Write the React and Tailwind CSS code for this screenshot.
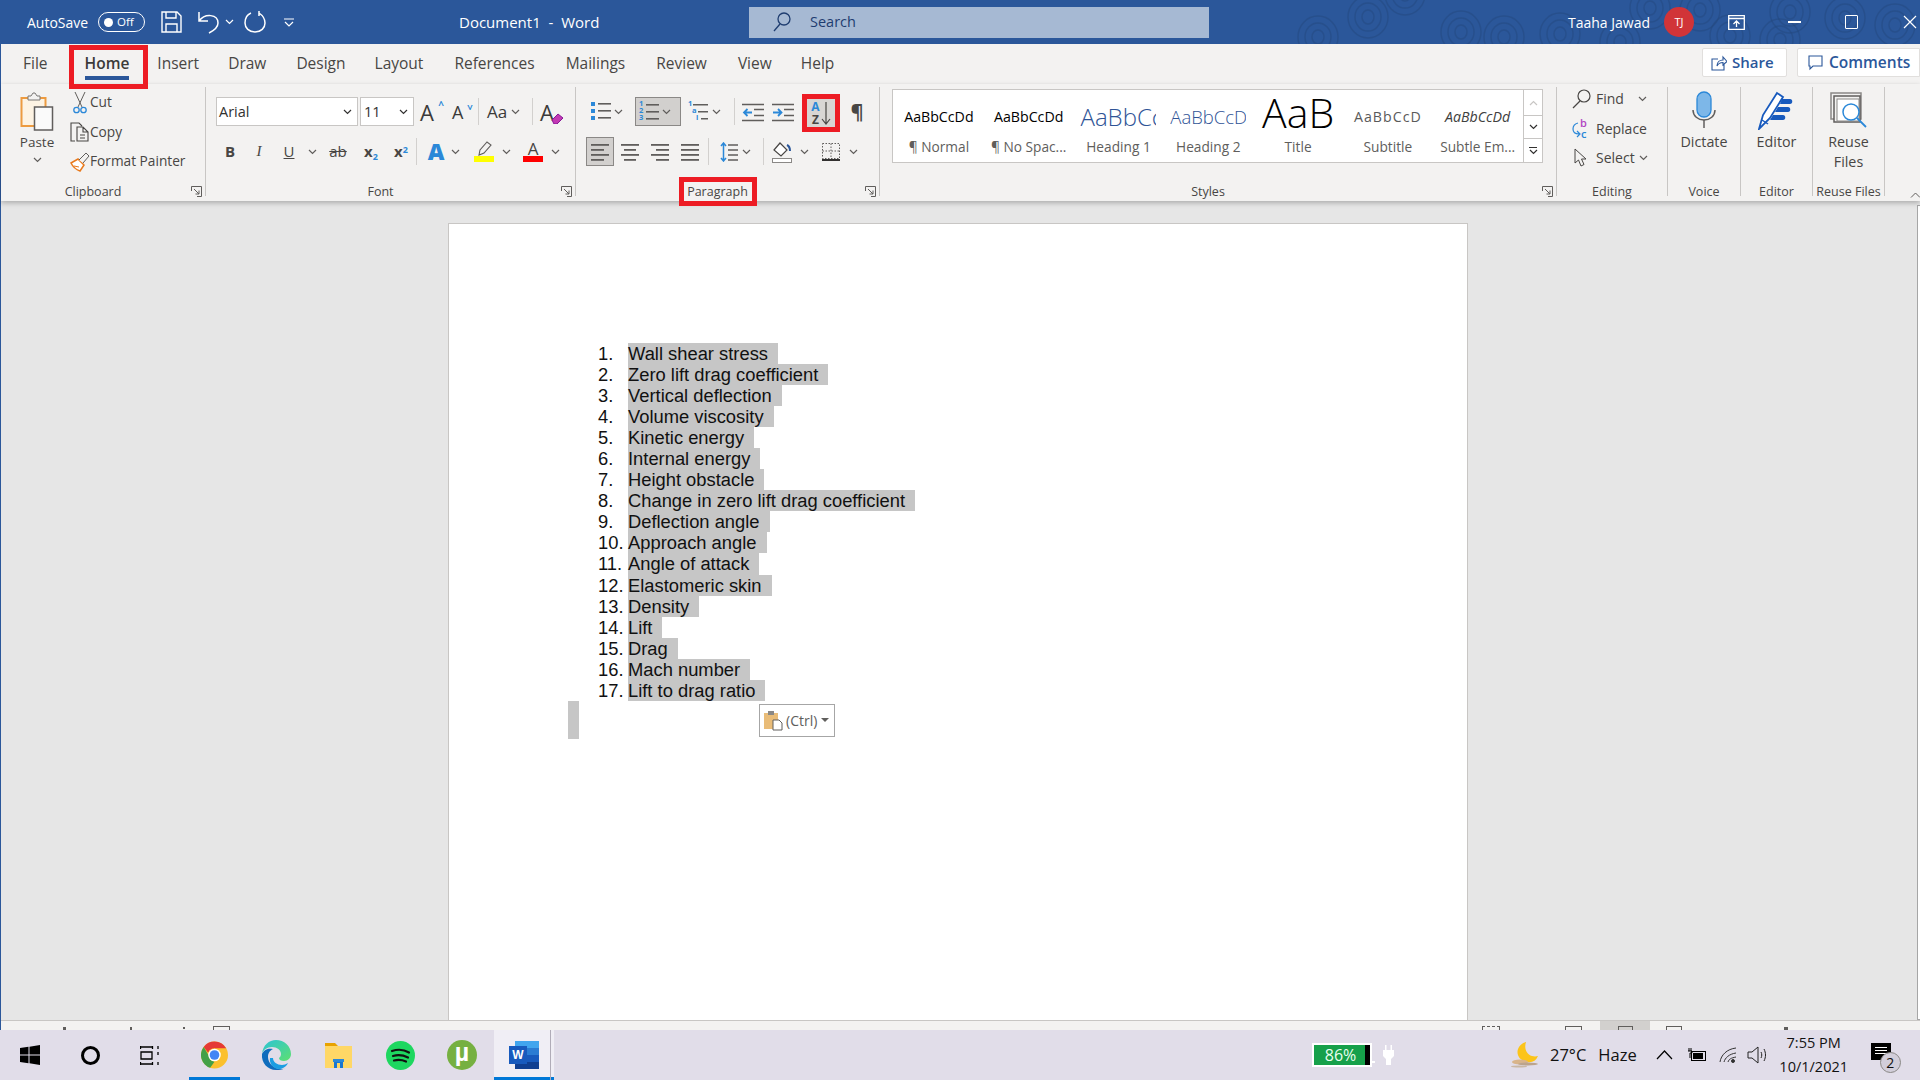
import React from "react";

const Chev = ({ color = "#605e5c", className = "" }) => (
  <svg width="9" height="6" viewBox="0 0 9 6" fill="none" className={className}>
    <path d="M1 1l3.5 3.5L8 1" stroke={color} strokeWidth="1.2" />
  </svg>
);

const ChevSlot = ({ className = "" }) => (
  <div className={`w-[14px] flex justify-center items-center ${className}`}>
    <Chev />
  </div>
);

const Sep = ({ className = "" }) => <div className={`w-px h-[27px] bg-[#d2d0ce] ${className}`} />;

const Launcher = () => (
  <svg width="11" height="11" viewBox="0 0 11 11" fill="none" className="absolute right-[3px] top-[2px]">
    <path d="M.5 5V.5H10.5V10.5H6M3 3l5 5M8 4.5V8H4.5" stroke="#605e5c" />
  </svg>
);

const Group = ({ label, launcher, className = "", children, labelBox }) => (
  <div className={`relative h-[109px] shrink-0 border-r border-[#c8c6c4] flex flex-col ${className}`}>
    <div className="flex-1 min-h-0">{children}</div>
    <div className={`relative h-[16px] -mb-[4px] flex justify-center items-center text-[12.5px] leading-[16px] text-[#484644] ${launcher ? "pr-[20px]" : ""}`}>
      <span className="relative whitespace-nowrap">
        {label}
        {labelBox && <span className="absolute left-[-8px] right-[-9px] top-[-7px] bottom-[-6px] border-[5px] border-[#ed1c24]" />}
      </span>
      {launcher && <Launcher />}
    </div>
  </div>
);

const Lines = ({ rows, w = 20 }) => (
  <svg width={w} height="20" viewBox={`0 0 ${w} 20`}>
    {rows.map(([x1, x2, y], i) => (
      <rect key={i} x={x1} y={y} width={x2 - x1} height="1.8" fill="#605e5c" />
    ))}
  </svg>
);

const Bullets = () => (
  <svg width="20" height="20" viewBox="0 0 20 20">
    {[2, 9, 16].map((y) => (
      <g key={y}>
        <rect x="0" y={y - 2} width="4" height="4" fill="#2b88d8" />
        <rect x="7" y={y - 1} width="13" height="1.6" fill="#605e5c" />
      </g>
    ))}
  </svg>
);

const Numbered = () => (
  <div className="relative w-[20px] h-[20px]">
    <svg width="20" height="20" viewBox="0 0 20 20" className="absolute inset-0">
      {[3, 10, 17].map((y) => (
        <rect key={y} x="7" y={y - 1} width="13" height="1.6" fill="#605e5c" />
      ))}
    </svg>
    <div className="absolute left-0 top-[-2px] flex flex-col text-[7.5px] leading-[7.4px] font-bold text-[#2b88d8]">
      <span>1</span>
      <span>2</span>
      <span>3</span>
    </div>
  </div>
);

const Multi = () => (
  <div className="relative w-[20px] h-[20px]">
    <svg width="20" height="20" viewBox="0 0 20 20" className="absolute inset-0">
      <rect x="5" y="2" width="15" height="1.5" fill="#605e5c" />
      <rect x="10" y="9" width="10" height="1.5" fill="#605e5c" />
      <rect x="13" y="16" width="7" height="1.5" fill="#605e5c" />
    </svg>
    <div className="absolute left-0 top-[-2px] flex flex-col text-[7.5px] leading-[7.4px] font-bold text-[#2b88d8]">
      <span>1</span>
      <span className="ml-[4px]">a</span>
      <span className="ml-[8px]">i</span>
    </div>
  </div>
);

const Indent = ({ flip }) => (
  <svg width="22" height="20" viewBox="0 0 22 20" fill="none">
    <path d="M0 2.5h22M0 18.5h22M12 7.5h10M12 13.5h10" stroke="#605e5c" strokeWidth="1.6" />
    {flip ? (
      <path d="M1 10.5h8M6 7l3.5 3.5L6 14" stroke="#2b88d8" strokeWidth="1.8" />
    ) : (
      <path d="M10 10.5H2M5.500 7L2 10.5 5.500 14" stroke="#2b88d8" strokeWidth="1.8" />
    )}
  </svg>
);

const titleRings = [
  [1318, 37], [1368, 17], [1461, 32], [1504, 37], [1405, -6], [1560, 34], [1620, 42], [1650, 8],
  [1700, 10], [1730, 36], [1790, 12], [1845, 18], [1895, 25], [1780, 40],
];

const TitleRings = () => (
  <svg width="1920" height="44" viewBox="0 0 1920 44" className="absolute inset-0" fill="none">
    {titleRings.map(([x, y]) => (
      <g key={`${x}-${y}`} stroke="#24497f" strokeWidth="1.4" opacity="0.5">
        <ellipse cx={x} cy={y} rx="6" ry="7" />
        <ellipse cx={x} cy={y} rx="13" ry="14" />
        <ellipse cx={x} cy={y} rx="20" ry="21" />
      </g>
    ))}
  </svg>
);

const TitleBar = () => (
  <div className="relative h-[44px] shrink-0 bg-[#2b579a] text-white flex items-center text-[14px]">
    <TitleRings />
    <div className="relative flex items-center pl-[27px] w-[459px]">
      <span className="w-[71px] whitespace-nowrap">AutoSave</span>
      <div className="w-[47px] h-[20px] rounded-full border border-white flex items-center pl-[5px] gap-[4px]">
        <span className="w-[9px] h-[9px] rounded-full bg-white" />
        <span className="text-[11.5px] leading-none">Off</span>
      </div>
      <svg width="21" height="22" viewBox="0 0 21 22" fill="none" stroke="white" strokeWidth="1.4" className="ml-[16px]">
        <path d="M1 1h15l4 4v16H1zM5 1v6h10V1M5 21v-8h11v8" />
      </svg>
      <svg width="23" height="24" viewBox="0 0 23 24" fill="none" stroke="white" strokeWidth="1.5" className="ml-[15px]">
        <path d="M2 2v9h9M2 11C8 3 21 4 21 13c0 4-3 7-9 10" />
      </svg>
      <Chev color="white" className="ml-[5px]" />
      <svg width="22" height="24" viewBox="0 0 22 24" fill="none" stroke="white" strokeWidth="1.5" className="ml-[10px]">
        <path d="M7 3C2 5 1 9 1 13c0 5 4 9 10 9s10-4 10-9c0-5-3-8-6-10M15 1v5" />
      </svg>
      <svg width="10" height="9" viewBox="0 0 10 9" fill="none" stroke="white" strokeWidth="1.2" className="ml-[18px]">
        <path d="M0 1h10M1 4l4 4 4-4" />
      </svg>
    </div>
    <span className="relative w-[290px] text-[15px] whitespace-nowrap">Document1&nbsp; -&nbsp; Word</span>
    <div className="relative w-[460px] h-[31px] bg-[#a6b9d3] flex items-center pl-[24px] text-[#1f3d70]">
      <svg width="18" height="20" viewBox="0 0 18 20" fill="none" stroke="#1f3d70" strokeWidth="1.3">
        <circle cx="11" cy="7" r="6" />
        <path d="M7 12L1 19" />
      </svg>
      <span className="ml-[19px] text-[14.5px]">Search</span>
    </div>
    <span className="relative ml-[359px] w-[96px] text-[14px] whitespace-nowrap">Taaha Jawad</span>
    <div className="relative w-[30px] h-[30px] rounded-full bg-[#d13438] flex items-center justify-center text-[11px]">TJ</div>
    <svg width="17" height="15" viewBox="0 0 17 15" fill="none" stroke="white" strokeWidth="1.3" className="relative ml-[34px]">
      <path d="M.7.7h15.600v13.600H.7zM.7 3.500h15.600M8.500 12V6M5.500 9l3-3 3 3" />
    </svg>
    <div className="relative ml-[43px] w-[13px] h-[1.5px] bg-white" />
    <div className="relative ml-[44px] w-[13px] h-[14px] border border-white rounded-[1px]" />
    <svg width="14" height="14" viewBox="0 0 14 14" stroke="white" strokeWidth="1.2" className="relative ml-[45px]">
      <path d="M1 1l12 12M13 1L1 13" />
    </svg>
  </div>
);

const tabs = [
  ["File", ""],
  ["Insert", "-ml-[2px]"],
  ["Draw", "-ml-[1px]"],
  ["Design", ""],
  ["Layout", "-ml-[1px]"],
  ["References", "ml-[1px]"],
  ["Mailings", "ml-[1px]"],
  ["Review", "ml-[1px]"],
  ["View", "ml-[1px]"],
  ["Help", "-ml-[1px]"],
];

const TabRow = () => (
  <div className="h-[40px] flex items-start pl-[22px] gap-[30px] pt-[8px] text-[15.5px] text-[#484644] relative z-20">
    <span>File</span>
    <span className="relative ml-[7px] font-semibold text-[#3b3a39]">
      Home
      <span className="absolute left-0 right-0 top-[24px] h-[4px] bg-[#2b579a]" />
      <span className="absolute left-[-16px] right-[-19px] top-[-7px] h-[44px] border-[5px] border-[#ed1c24]" />
    </span>
    {tabs.slice(1).map(([t, cls]) => (
      <span key={t} className={cls}>{t}</span>
    ))}
    <div className="ml-auto flex gap-[10px] -mt-[4px]">
      <div className="w-[85px] h-[29px] bg-white border border-[#e1dfdd] rounded-[2px] flex items-center pl-[8px] gap-[5px] text-[#2b579a] font-semibold text-[15px]">
        <svg width="16" height="16" viewBox="0 0 16 16" fill="none" stroke="#2b579a" strokeWidth="1.1">
          <path d="M7 4H1v11h12V9M6 11c0-4 3-6 6-6V2l4 4.500L12 10V7.500C9 7.500 7 9 6 11z" />
        </svg>
        Share
      </div>
      <div className="w-[123px] h-[29px] bg-white border border-[#e1dfdd] rounded-l-[2px] flex items-center pl-[10px] gap-[6px] text-[#2b579a] font-semibold text-[15.5px]">
        <svg width="15" height="16" viewBox="0 0 15 16" fill="none" stroke="#2b579a" strokeWidth="1.1">
          <path d="M1 1h13v10H5l-3 3v-3H1z" />
        </svg>
        Comments
      </div>
    </div>
  </div>
);

const SmallTool = ({ icon, label }) => (
  <div className="flex items-center h-[29.500px]">
    <div className="w-[21px] flex justify-center">{icon}</div>
    <span className="whitespace-nowrap text-[#484644] text-[13.7px]">{label}</span>
  </div>
);

const Clipboard = () => (
  <Group label="Clipboard" launcher className="w-[205px]">
    <div className="flex pt-[5px] pl-[10px]">
      <div className="w-[52px] flex flex-col items-center text-[13.5px] text-[#484644]">
        <svg width="34" height="39" viewBox="0 0 34 39" fill="none">
          <rect x="1.500" y="6" width="24" height="28" fill="#fdf3e3" stroke="#ed9b40" strokeWidth="2" />
          <path d="M8 8V4h3l2-3h2l2 3h3v4z" fill="#f3f2f1" stroke="#797775" />
          <rect x="14.500" y="15" width="18" height="23" fill="#fafafa" stroke="#605e5c" strokeWidth="1.5" />
        </svg>
        <span className="mt-[1px] leading-[20px]">Paste</span>
        <Chev className="mt-[5px]" />
      </div>
      <div className="ml-[6px] -mt-[4px]">
        <SmallTool
          label="Cut"
          icon={
            <svg width="16" height="22" viewBox="0 0 16 22" fill="none">
              <path d="M3 0l7 15M13 0L6 15" stroke="#605e5c" />
              <circle cx="4.500" cy="18" r="2.700" stroke="#2b88d8" strokeWidth="1.300" />
              <circle cx="11.500" cy="18" r="2.700" stroke="#2b88d8" strokeWidth="1.300" />
            </svg>
          }
        />
        <SmallTool
          label="Copy"
          icon={
            <svg width="19" height="20" viewBox="0 0 19 20" fill="none" stroke="#484644" strokeWidth="1.1">
              <path d="M5 19H1V1h8l3 3M7 5h6l5 5v9H7zM13 5v5h5M10 13h5M10 16h5" />
            </svg>
          }
        />
        <SmallTool
          label="Format Painter"
          icon={
            <svg width="20" height="20" viewBox="0 0 20 20" fill="none">
              <path d="M1 11l7-4 6 6-4 6c-3-1-7-4-9-8z" fill="#fff" stroke="#e97a1d" strokeWidth="1.500" />
              <path d="M9 8l7-7 3 3-6 7" fill="#f3f2f1" stroke="#605e5c" />
              <path d="M4 14l5 1" stroke="#e97a1d" />
            </svg>
          }
        />
      </div>
    </div>
  </Group>
);

const Sel = ({ className = "", children }) => (
  <div className={`h-[29px] bg-white border border-[#c8c6c4] flex items-center justify-between pl-[2px] pr-[5px] text-[14.5px] text-[#323130] ${className}`}>
    <span>{children}</span>
    <Chev color="#323130" />
  </div>
);

const Font = () => (
  <Group label="Font" launcher className="w-[370px]">
    <div className="pt-[10px]">
      <div className="flex items-center h-[29px] text-[#3b3a39]">
        <Sel className="ml-[10px] w-[142px]">Arial</Sel>
        <Sel className="ml-[2px] w-[54px] pl-[3px]">11</Sel>
        <div className="ml-[6px] w-[22px] relative text-[22px] leading-none">
          A<span className="absolute right-[-2px] top-[-1px] text-[#2b88d8] text-[10px] font-bold">^</span>
        </div>
        <div className="ml-[10px] w-[20px] relative text-[18px] leading-none">
          A<span className="absolute right-[-1px] top-[-2px] text-[#2b88d8] text-[10px] font-bold rotate-180">^</span>
        </div>
        <Sep className="ml-[6px]" />
        <span className="ml-[8px] w-[22px] text-[17px] leading-none whitespace-nowrap">Aa</span>
        <Chev className="ml-[2px]" />
        <Sep className="ml-[12px]" />
        <div className="ml-[7px] w-[22px] relative text-[22px] leading-none">
          A
          <svg width="13" height="11" viewBox="0 0 13 11" className="absolute right-[-2px] bottom-[-1px]">
            <path d="M1 7l6-6 5 4-6 6H3z" fill="#c239b3" stroke="#881798" />
          </svg>
        </div>
      </div>
      <div className="flex items-center h-[29px] mt-[11px] text-[#484644]">
        <span className="ml-[10px] w-[28px] text-center font-bold text-[15px]">B</span>
        <span className="w-[30px] text-center italic text-[15px] font-['Liberation_Serif',serif]">I</span>
        <span className="w-[30px] text-center underline text-[15px]">U</span>
        <ChevSlot className="ml-[1px]" />
        <span className="w-[36px] text-center line-through text-[15px] ml-[1px]">ab</span>
        <span className="w-[30px] text-center text-[15px] font-bold">
          x<sub className="text-[#2b88d8] text-[9px] font-bold">2</sub>
        </span>
        <span className="w-[30px] text-center text-[15px] font-bold">
          x<sup className="text-[#2b88d8] text-[9px] font-bold">2</sup>
        </span>
        <Sep />
        <span className="ml-[7px] w-[24px] text-center text-[23px] leading-none font-extrabold text-[#2b88d8]">A</span>
        <ChevSlot />
        <div className="ml-[10px] w-[24px] flex flex-col items-center">
          <svg width="18" height="15" viewBox="0 0 18 15" fill="none" stroke="#605e5c" strokeWidth="1.100">
            <path d="M4 14l1-5 7-8 4 3-7 8z" />
          </svg>
          <div className="w-[20px] h-[6px] bg-[#ffff00]" />
        </div>
        <ChevSlot className="ml-[3px]" />
        <div className="ml-[8px] w-[24px] flex flex-col items-center">
          <span className="text-[17px] leading-[15px] h-[15px]">A</span>
          <div className="w-[20px] h-[6px] bg-[#ff0000]" />
        </div>
        <ChevSlot className="ml-[3px]" />
      </div>
    </div>
  </Group>
);

const Paragraph = () => (
  <Group label="Paragraph" launcher labelBox className="w-[304px]">
    <div className="pt-[10px]">
      <div className="flex items-center h-[29px]">
        <div className="ml-[15px]"><Bullets /></div>
        <ChevSlot />
        <div className="ml-[10px] w-[46px] h-[29px] bg-[#d2d0ce] border border-[#8a8886] flex items-center pl-[3px] gap-[3px]">
          <Numbered />
          <Chev />
        </div>
        <div className="ml-[7px]"><Multi /></div>
        <ChevSlot className="ml-[1px]" />
        <Sep className="ml-[11px]" />
        <div className="ml-[7px]"><Indent /></div>
        <div className="ml-[8px]"><Indent flip /></div>
        <div className="relative ml-[8px] mt-[3px] w-[38px] h-[38px] bg-[#d8d6d4] border-[5px] border-[#ed1c24] flex items-center justify-center gap-[1px]">
          <div className="flex flex-col items-center text-[12px] leading-[13px] font-bold">
            <span className="text-[#2b88d8]">A</span>
            <span className="text-[#484644]">Z</span>
          </div>
          <svg width="10" height="24" viewBox="0 0 10 24" fill="none" stroke="#484644" strokeWidth="1.200">
            <path d="M5 1v22M1 18l4 5 4-5" />
          </svg>
        </div>
        <span className="ml-[8px] w-[18px] text-center text-[20px] leading-none font-bold text-[#484644]">¶</span>
      </div>
      <div className="flex items-center h-[29px] mt-[11px]">
        <div className="ml-[10px] w-[28px] h-[29px] bg-[#d2d0ce] border border-[#8a8886] flex items-center justify-center">
          <Lines rows={[[0, 18, 2], [0, 13, 7], [0, 18, 12], [0, 13, 17]]} w={18} />
        </div>
        <div className="ml-[6px]"><Lines rows={[[1, 19, 2], [4, 16, 7], [1, 19, 12], [4, 16, 17]]} /></div>
        <div className="ml-[10px]"><Lines rows={[[1, 19, 2], [6, 19, 7], [1, 19, 12], [6, 19, 17]]} /></div>
        <div className="ml-[10px]"><Lines rows={[[1, 19, 2], [1, 19, 7], [1, 19, 12], [1, 19, 17]]} /></div>
        <Sep className="ml-[8px]" />
        <svg width="18" height="20" viewBox="0 0 18 20" fill="none" className="ml-[11px]">
          <path d="M3.500 1v18M1 4l2.500-3L6 4M1 16l2.500 3L6 16" stroke="#2b88d8" strokeWidth="1.500" />
          <path d="M8 3h10M8 8h10M8 13h10M8 18h10" stroke="#605e5c" strokeWidth="1.600" />
        </svg>
        <ChevSlot className="ml-[1px]" />
        <Sep className="ml-[10px]" />
        <svg width="20" height="22" viewBox="0 0 20 22" fill="none" className="ml-[8px]">
          <path d="M2 9l6-7 7 7-6 6z" fill="#fff" stroke="#484644" strokeWidth="1.200" />
          <path d="M15 4c2 1 3 4 3 6" stroke="#2b579a" strokeWidth="2" />
          <rect x=".5" y="17.500" width="19" height="4" fill="#fff" stroke="#8a8886" />
        </svg>
        <ChevSlot className="ml-[5px]" />
        <svg width="18" height="18" viewBox="0 0 18 18" fill="none" className="ml-[11px]">
          <path d="M.5 .5h17v15H.5zM9 .5v15M.5 8h17" stroke="#605e5c" strokeDasharray="1.500 1.500" />
          <path d="M0 17h18" stroke="#323130" strokeWidth="2" />
        </svg>
        <ChevSlot className="ml-[6px]" />
      </div>
    </div>
  </Group>
);

const styleItems = [
  { label: "¶ Normal", preview: "AaBbCcDd", cls: "text-[14.2px] text-black" },
  { label: "¶ No Spac...", preview: "AaBbCcDd", cls: "text-[14.2px] text-black" },
  { label: "Heading 1", preview: "AaBbCcDd", cls: "text-[24px] font-light text-[#2f5496]" },
  { label: "Heading 2", preview: "AaBbCcDd", cls: "text-[18.500px] font-light text-[#2f5496]" },
  { label: "Title", preview: "AaB", cls: "text-[41px] font-light text-black -mt-[10px]" },
  { label: "Subtitle", preview: "AaBbCcD", cls: "text-[14.2px] tracking-[1px] text-[#5a5a5a]" },
  { label: "Subtle Em...", preview: "AaBbCcDd", cls: "text-[14.2px] italic text-[#404040]" },
];

const Styles = () => (
  <Group label="Styles" launcher className="w-[677px]">
    <div className="pt-[2px] pl-[12px]">
      <div className="w-[651px] h-[74px] bg-white border border-[#c8c6c4] flex pl-[1px]">
        {styleItems.map((s) => (
          <div key={s.label} className="w-[89.800px] flex flex-col items-center">
            <div className="w-[76px] h-[38px] mt-[8px] flex items-center justify-center overflow-hidden">
              <span className={`block w-full whitespace-nowrap leading-none text-center ${s.cls}`}>{s.preview}</span>
            </div>
            <span className="text-[13.700px] leading-[18px] text-[#605e5c] whitespace-nowrap mt-[1.500px]">{s.label}</span>
          </div>
        ))}
        <div className="ml-auto w-[19px] flex flex-col border-l border-[#c8c6c4]">
          <div className="h-[25px] flex items-center justify-center">
            <Chev color="#c8c6c4" className="rotate-180" />
          </div>
          <div className="h-[24px] flex items-center justify-center border-y border-[#c8c6c4]">
            <Chev color="#323130" />
          </div>
          <div className="flex-1 flex flex-col items-center justify-center gap-[1px]">
            <div className="w-[8px] h-px bg-[#323130]" />
            <Chev color="#323130" />
          </div>
        </div>
      </div>
    </div>
  </Group>
);

const EditRow = ({ icon, label, chevClass = "" }) => (
  <div className="flex items-center h-[29.500px]">
    <div className="w-[20px] flex justify-center">{icon}</div>
    <span className="ml-[5px] text-[14px] text-[#484644]">{label}</span>
    {chevClass && <Chev className={chevClass} />}
  </div>
);

const Editing = () => (
  <Group label="Editing" className="w-[111px]">
    <div className="pl-[14px] -mt-[3px]">
      <EditRow
        label="Find"
        chevClass="ml-[14px]"
        icon={
          <svg width="19" height="20" viewBox="0 0 19 20" fill="none" stroke="#484644" strokeWidth="1.200">
            <circle cx="12" cy="7" r="6" />
            <path d="M8 12l-7 7" />
          </svg>
        }
      />
      <EditRow
        label="Replace"
        icon={
          <div className="relative w-[18px] h-[22px] text-[11px] leading-none">
            <span className="absolute left-[8px] top-0 text-[#b146c2] font-semibold">b</span>
            <span className="absolute left-[9px] bottom-0 text-[#2b88d8] font-semibold">c</span>
            <svg width="10" height="16" viewBox="0 0 10 16" fill="none" stroke="#2b88d8" strokeWidth="1.200" className="absolute left-0 top-[5px]">
              <path d="M6 1C2 2 1 5 1 7c0 3 2 5 6 5M5 9l3 3-3 3" />
            </svg>
          </div>
        }
      />
      <EditRow
        label="Select"
        chevClass="ml-[4px]"
        icon={
          <svg width="14" height="20" viewBox="0 0 14 20" fill="#f3f2f1" stroke="#484644">
            <path d="M1 1v14l3.500-3 2.500 6 3-1.500-2.500-5.500H12z" />
          </svg>
        }
      />
    </div>
  </Group>
);

const BigBtn = ({ icon, label }) => (
  <div className="flex flex-col items-center">
    <div className="h-[44px] flex items-center">{icon}</div>
    <span className="text-[14.3px] leading-[20px] text-[#484644] text-center">{label}</span>
  </div>
);

const Voice = () => (
  <Group label="Voice" className="w-[73px]">
    <div className="pt-[1px]">
      <BigBtn
        label="Dictate"
        icon={
          <svg width="24" height="38" viewBox="0 0 24 38" fill="none">
            <rect x="5" y="1" width="14" height="25" rx="7" fill="#7db7e8" stroke="#2b88d8" strokeWidth="1.300" />
            <path d="M1 19c0 6 5 10 11 10s11-4 11-10" stroke="#605e5c" strokeWidth="1.500" />
            <path d="M12 29v8" stroke="#605e5c" strokeWidth="1.500" />
          </svg>
        }
      />
    </div>
  </Group>
);

const EditorG = () => (
  <Group label="Editor" className="w-[72px]">
    <div className="pt-[1px]">
      <BigBtn
        label="Editor"
        icon={
          <svg width="38" height="39" viewBox="0 0 38 39" fill="none">
            <path d="M1 38l4-14L19 2l6 4-13 21z" fill="#fff" stroke="#185abd" strokeWidth="1.800" />
            <path d="M4 29l6 4" stroke="#185abd" strokeWidth="1.500" />
            <path d="M24 8h8c3 0 3 5 0 5h-10zM20 16h10c3 0 3 5 0 5H17zM15 24h10c3 0 3 5 0 5H12z" fill="#185abd" />
          </svg>
        }
      />
    </div>
  </Group>
);

const Reuse = () => (
  <Group label="Reuse Files" className="w-[72px]">
    <div className="pt-[1px]">
      <BigBtn
        label={<>Reuse<br />Files</>}
        icon={
          <svg width="38" height="36" viewBox="0 0 38 36" fill="none">
            <rect x="1" y="1" width="30" height="26" stroke="#8a8886" strokeWidth="1.500" />
            <rect x="4" y="4" width="26" height="26" fill="#f3f2f1" stroke="#605e5c" strokeWidth="1.500" />
            <rect x="7" y="7" width="22" height="22" fill="#fff" stroke="#8a8886" />
            <circle cx="21" cy="20" r="8" fill="#fff" stroke="#2b88d8" strokeWidth="1.500" />
            <path d="M27 26l9 9" stroke="#2b88d8" strokeWidth="1.800" />
          </svg>
        }
      />
    </div>
  </Group>
);

const Ribbon = () => (
  <div className="relative z-10 h-[117px] shrink-0 shadow-[0_2px_5px_rgba(0,0,0,0.25)] bg-[#f3f2f1] pt-[3px] flex">
    <Clipboard />
    <Font />
    <Paragraph />
    <Styles />
    <Editing />
    <Voice />
    <EditorG />
    <Reuse />
    <div className="flex-1 flex items-end justify-end pb-[3px]">
      <svg width="10" height="6" viewBox="0 0 10 6" fill="none" stroke="#605e5c">
        <path d="M1 5.500L5.500 1 10 5.500" />
      </svg>
    </div>
  </div>
);

const terms = [
  "Wall shear stress", "Zero lift drag coefficient", "Vertical deflection", "Volume viscosity", "Kinetic energy",
  "Internal energy", "Height obstacle", "Change in zero lift drag coefficient", "Deflection angle", "Approach angle",
  "Angle of attack", "Elastomeric skin", "Density", "Lift", "Drag", "Mach number", "Lift to drag ratio",
];

const Document = () => (
  <div className="flex-1 min-h-0 bg-[#e6e6e6] flex overflow-hidden">
    <div className="ml-[447px] mt-[22px] w-[1020px] bg-white border-x border-t border-[#c8c6c4] pt-[119px] pl-[119px] font-['Liberation_Sans',sans-serif] text-[18.350px] text-[#111]">
      <ol className="ml-[30px]">
        {terms.map((t, i) => (
          <li key={t} className="flex h-[21.050px] leading-[21.500px]">
            <span className="w-[30px] shrink-0">{i + 1}.</span>
            <span className="bg-[#c6c6c6] pr-[10px] whitespace-nowrap">{t}</span>
          </li>
        ))}
      </ol>
      <div className="flex">
        <div className="w-[11px] h-[38px] bg-[#c6c6c6]" />
        <div className="ml-[180px] mt-[3px] w-[76px] h-[33px] bg-white border border-[#a6a6a6] flex items-center pl-[4px] font-['Open_Sans',sans-serif] text-[14px] text-[#605e5c]">
          <svg width="19" height="21" viewBox="0 0 19 21" fill="none">
            <rect x="0" y="3" width="14" height="16" fill="#e9bc78" />
            <rect x="4" y="1" width="6" height="4" fill="#8a8886" />
            <path d="M9 10h6l3 3v7H9z" fill="#fff" stroke="#605e5c" />
          </svg>
          <span className="ml-[3px]">(Ctrl)</span>
          <span className="ml-[4px] w-0 h-0 border-x-[4px] border-x-transparent border-t-[4px] border-t-[#605e5c]" />
        </div>
      </div>
    </div>
    <div className="ml-auto mt-[4px] w-[3px] bg-white border-l border-y border-[#a6a6a6]" />
  </div>
);

const StatusBar = () => (
  <div className="h-[10px] shrink-0 bg-[#f3f2f1] border-t border-[#c8c6c4] flex overflow-hidden">
    <div className="ml-[62px] mt-[6px] w-[3px] h-[3px] bg-[#605e5c]" />
    <div className="ml-[64px] mt-[6px] w-[2px] h-[3px] bg-[#605e5c]" />
    <div className="ml-[51px] mt-[6px] w-[2px] h-[2px] bg-[#605e5c]" />
    <div className="ml-[28px] mt-[5px] w-[17px] h-[6px] border border-[#605e5c]" />
    <div className="ml-[1252px] mt-[5px] w-[18px] h-[6px] border-t border-x border-dashed border-[#605e5c]" />
    <div className="ml-[65px] mt-[5px] w-[17px] h-[6px] border border-[#605e5c]" />
    <div className="ml-[18px] w-[50px] h-full bg-[#d2d0ce] flex justify-center pt-[5px]">
      <div className="w-[15px] h-[6px] border border-[#605e5c]" />
    </div>
    <div className="ml-[16px] mt-[5px] w-[16px] h-[6px] border border-[#605e5c]" />
    <div className="ml-[102px] mt-[6px] w-[4px] h-[4px] bg-[#605e5c]" />
  </div>
);

const Slot = ({ active, className = "", children }) => (
  <div className={`relative h-full flex items-center justify-center ${className}`}>
    {children}
    {active && <div className="absolute left-[6px] right-[5px] bottom-0 h-[3px] bg-[#0078d7]" />}
  </div>
);

const Taskbar = () => (
  <div className="h-[50px] shrink-0 bg-[#e1dde9] flex items-center text-[#111]">
    <Slot className="w-[60px]">
      <svg width="20" height="20" viewBox="0 0 20 20" fill="#000">
        <path d="M0 3l8.500-1.200V9.500H0zM9.500 1.700L20 0v9.500H9.500zM0 10.500h8.500v7.700L0 17zM9.500 10.500H20V20L9.500 18.300z" />
      </svg>
    </Slot>
    <Slot className="w-[60px]">
      <div className="w-[19px] h-[19px] rounded-full border-[3px] border-black" />
    </Slot>
    <Slot className="w-[60px]">
      <svg width="20" height="19" viewBox="0 0 20 19" fill="none" stroke="#000" strokeWidth="1.300">
        <path d="M0 1h13M12.500 0v3M0.500 0v3M1 6h11v7H1zM0 18h13M.5 16v3M12.500 16v3M18 0v3M18 6v3M18 16v3" />
      </svg>
    </Slot>
    <Slot active className="w-[62px] ml-[3px]">
      <svg width="27" height="28" viewBox="0 0 28 28">
        <circle cx="14" cy="14" r="14" fill="#fbc02d" />
        <path d="M14 0a14 14 0 0 1 12.100 7H14a7 7 0 0 0-6.600 4.700L2.800 5.600A14 14 0 0 1 14 0z" fill="#e53935" />
        <path d="M2.800 5.600l5.600 9.700A7 7 0 0 0 14 21l-4.500 6.300A14 14 0 0 1 2.800 5.600z" fill="#43a047" />
        <circle cx="14" cy="14" r="6.500" fill="#fff" />
        <circle cx="14" cy="14" r="5" fill="#4285f4" />
      </svg>
    </Slot>
    <Slot className="w-[62px]">
      <svg width="30" height="30" viewBox="0 0 30 30">
        <defs>
          <linearGradient id="edgeTop" x1="0" y1="0" x2="1" y2="1">
            <stop offset="0" stopColor="#2bc3d6" />
            <stop offset="1" stopColor="#5ee070" />
          </linearGradient>
        </defs>
        <path d="M1 14C2 5 8 0 15 0c8 0 15 6 15 14 0 4-3 7-7 7-3 0-5-1-5-3 1-1 2-2 2-4 0-4-4-7-9-7-5 0-9 3-10 7z" fill="url(#edgeTop)" />
        <path d="M1 14c2-5 7-6 11-5-4 2-5 5-5 8 0 6 6 12 13 12 2 0 3 0 4-1-3 2-6 2-9 2C7 30 0 23 1 14z" fill="#0f6cbd" />
        <path d="M12 18c0 4 4 7 9 7 2 0 4-1 6-2-2 4-6 6-9 6-6 0-10-6-9-11z" fill="#1b9de2" />
      </svg>
    </Slot>
    <Slot className="w-[62px]">
      <svg width="27" height="28" viewBox="0 0 27 28">
        <path d="M0 2h10l3 3H0z" fill="#e8a200" />
        <rect x="0" y="5" width="27" height="22" fill="#ffd766" />
        <path d="M9 27v-8h9v8h-3v-5h-3v5z" fill="#1976d2" />
        <rect x="8" y="18" width="11" height="3" fill="#2b88d8" />
      </svg>
    </Slot>
    <Slot className="w-[62px]">
      <svg width="29" height="29" viewBox="0 0 29 29" fill="none">
        <circle cx="14.500" cy="14.500" r="14.500" fill="#1ed760" />
        <path d="M6 10c6-2 12-1.500 17 1.500M7 15c5-1.500 10-1 15 1.500M8 19.500c4-1 8-.8 12 1" stroke="#111" strokeWidth="2.200" strokeLinecap="round" />
      </svg>
    </Slot>
    <Slot className="w-[62px]">
      <div className="w-[30px] h-[30px] rounded-full bg-[#76b041] flex items-center justify-center text-white font-bold text-[25px] leading-none font-['Liberation_Sans',sans-serif] pb-[5px]">µ</div>
    </Slot>
    <div className="relative ml-px w-[60px] h-full bg-[#f0eef5] flex items-center justify-center">
      <svg width="30" height="30" viewBox="0 0 30 30">
        <rect x="6" y="1" width="24" height="7" fill="#41a5ee" />
        <rect x="6" y="8" width="24" height="7" fill="#2b7cd3" />
        <rect x="6" y="15" width="24" height="7" fill="#185abd" />
        <rect x="6" y="22" width="24" height="7" fill="#103f91" />
      </svg>
      <span className="absolute left-[15px] top-[16px] w-[18px] h-[18px] bg-[#185abd] text-white text-[12px] font-bold leading-[18px] text-center font-['Liberation_Sans',sans-serif]">W</span>
      <div className="absolute left-0 right-0 bottom-0 h-[3px] bg-[#0078d7]" />
      <div className="absolute right-[3px] top-0 bottom-0 w-px bg-[#b0acb8]" />
    </div>

    <div className="ml-[758px] w-[60px] h-[24px] border-[2px] border-white bg-[#16a04a] flex items-center text-[#eafff0] text-[16px]">
      <span className="flex-1 text-center pl-[2px]">86%</span>
      <div className="w-[5px] h-full bg-black" />
    </div>
    <div className="w-[3px] h-[2px] bg-white mt-[14px]" />
    <svg width="11" height="20" viewBox="0 0 11 20" fill="#fff" className="ml-[8px]">
      <path d="M2 0h1.500v5h4V0H9v5h2v6l-3 3v6H3v-6L0 11V5h2z" />
    </svg>
    <svg width="28" height="28" viewBox="0 0 28 28" className="ml-[117px]">
      <path d="M15 1c-2 6 0 12 6 14 2 .5 4 .5 6 0-2 5-6 7-11 6C9 20 5 14 7 8c1-3 4-6 8-7z" fill="#fcc419" />
      <ellipse cx="9" cy="21" rx="8" ry="2.500" fill="#d8b48a" />
      <ellipse cx="17" cy="23" rx="10" ry="1.500" fill="#bca48c" />
      <ellipse cx="8" cy="25.500" rx="8" ry="1" fill="#c9b7a4" />
    </svg>
    <span className="ml-[11px] text-[16.500px] whitespace-nowrap">27°C</span>
    <span className="ml-[12px] text-[16.500px]">Haze</span>
    <svg width="17" height="10" viewBox="0 0 17 10" fill="none" stroke="#000" strokeWidth="1.200" className="ml-[19px]">
      <path d="M1 9l7.500-8L16 9" />
    </svg>
    <svg width="20" height="14" viewBox="0 0 20 14" fill="none" className="ml-[14px]">
      <rect x="4.500" y="3.500" width="14" height="9" stroke="#000" />
      <rect x="6" y="5" width="10" height="6" fill="#000" />
      <path d="M2 0v3M4 0v3M1 3h4v2H3v5" stroke="#000" />
    </svg>
    <svg width="18" height="16" viewBox="0 0 18 16" fill="none" stroke="#333" className="ml-[12px]">
      <path d="M1 15C2 8 8 2 17 1M5 15c1-4 5-8 12-9M9 15c1-3 3-4 8-5" />
      <circle cx="14" cy="14" r="1.500" fill="#333" />
    </svg>
    <svg width="20" height="18" viewBox="0 0 20 18" fill="none" stroke="#222" className="ml-[10px]">
      <path d="M1 6h4l6-5v16l-6-5H1zM14 6c1 2 1 4 0 6M17 3c2 4 2 8 0 12" />
    </svg>
    <div className="ml-[14px] w-[66px] flex flex-col items-center text-[14.500px] leading-[24px] whitespace-nowrap">
      <span>7:55 PM</span>
      <span>10/1/2021</span>
    </div>
    <div className="relative ml-[24px] w-[20px] h-[17px] bg-black -mt-[8px]">
      <div className="mt-[4px] mx-[4px] h-px bg-white" />
      <div className="mt-[2px] mx-[4px] h-px bg-white" />
      <div className="mt-[2px] mx-[4px] h-px bg-white" />
      <span className="absolute left-[9px] top-[9px] w-[21px] h-[21px] rounded-full bg-[#d2ceda] border border-[#8a8886] text-[14px] leading-[19px] text-center">2</span>
    </div>
  </div>
);

const App = () => (
  <div className="w-[1920px] h-[1080px] flex flex-col overflow-hidden font-['Open_Sans',sans-serif]">
    <TitleBar />
    <div className="flex-1 min-h-0 flex flex-col border-l border-[#2b579a] bg-[#f3f2f1]">
      <TabRow />
      <Ribbon />
      <Document />
      <StatusBar />
    </div>
    <Taskbar />
  </div>
);

export default App;
